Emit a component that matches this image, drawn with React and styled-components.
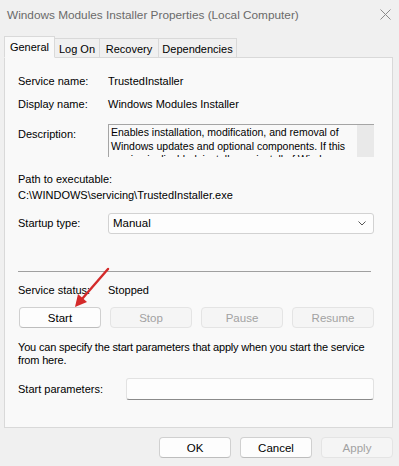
import React from 'react';
import styled, { createGlobalStyle } from 'styled-components';

const GlobalStyle = createGlobalStyle`
  body {
    margin: 0;
    background-color: #f0f0f0;
    font-family: 'Liberation Sans', Arial, sans-serif;
    font-size: 11px;
    color: #000;
  }
`;

const Window = styled.div`
  position: relative;
  width: 399px;
  height: 466px;
  background-color: #f0f0f0;
  overflow: hidden;
`;

const TitleBar = styled.div`
  display: flex;
  align-items: center;
  justify-content: space-between;
  height: 30px;
  padding: 0 8px 0 7px;
  color: #6a6a6a;
  font-size: 11.8px;
`;

const CloseIcon = styled.svg`
  width: 11px;
  height: 11px;
  margin-top: -2px;
`;

const Tabs = styled.div`
  display: flex;
  align-items: flex-end;
  height: 27px;
  margin-left: 4px;
`;

const Tab = styled.div`
  display: flex;
  align-items: center;
  justify-content: center;
  height: ${({ active }) => (active ? '22px' : '20px')};
  width: ${({ w }) => w}px;
  margin-bottom: -1px;
  background-color: ${({ active }) => (active ? '#f9f9f9' : '#f0f0f0')};
  border: 1px solid #d9d9d9;
  border-bottom: ${({ active }) => (active ? '1px solid #f9f9f9' : '1px solid #d9d9d9')};
  border-left: ${({ first }) => (first ? '1px solid #d9d9d9' : 'none')};
  box-sizing: border-box;
  position: relative;
  z-index: ${({ active }) => (active ? 2 : 1)};
  padding-top: ${({ active }) => (active ? '0' : '1px')};
`;

const Panel = styled.div`
  position: relative;
  width: 389px;
  height: 371px;
  margin-left: 4px;
  box-sizing: border-box;
  background-color: #f9f9f9;
  border: 1px solid #d9d9d9;
  padding: 16px 17px 0 13px;
`;

const Row = styled.div`
  display: flex;
  align-items: ${({ top }) => (top ? 'flex-start' : 'center')};
  margin-top: ${({ mt }) => mt || 0}px;
  line-height: 15px;
`;

const Label = styled.div`
  width: ${({ w }) => w || 90}px;
  flex-shrink: 0;
  padding-top: ${({ pt }) => pt || 0}px;
`;

const Plain = styled.div`
  line-height: ${({ lh }) => lh || 15}px;
  margin-top: ${({ mt }) => mt || 0}px;
  white-space: nowrap;
  letter-spacing: ${({ tight }) => (tight ? '-0.18px' : 'normal')};
`;

const DescBox = styled.div`
  display: flex;
  width: 266px;
  height: 33px;
  box-sizing: border-box;
  border-top: 1px solid #a5a5a5;
  border-left: 1px solid #a5a5a5;
  background-color: #f9f9f9;
  overflow: hidden;
`;

const DescText = styled.div`
  flex: 1;
  padding: 1px 0 0 2px;
  font-size: 10.5px;
  line-height: 13.5px;
  white-space: nowrap;
  overflow: hidden;
`;

const ScrollTrack = styled.div`
  width: 17px;
  background-color: #e9e9e9;
`;

const Select = styled.div`
  display: flex;
  align-items: center;
  justify-content: space-between;
  width: 266px;
  height: 21px;
  box-sizing: border-box;
  padding: 0 7px 0 4px;
  background-color: #fdfdfd;
  border: 1px solid #d2d2d2;
  border-radius: 3px;
  font-size: 11.5px;
`;

const Chevron = styled.svg`
  width: 8px;
  height: 5px;
`;

const Separator = styled.div`
  width: 353px;
  height: 1px;
  margin: 37px 0 0 0;
  background-color: #a0a0a0;
`;

const ButtonRow = styled.div`
  display: grid;
  grid-template-columns: repeat(${({ cols }) => cols}, ${({ bw }) => bw}px);
  gap: 9px;
  margin-top: ${({ mt }) => mt || 0}px;
  margin-left: ${({ ml }) => ml || 0}px;
`;

const Button = styled.div`
  display: flex;
  align-items: center;
  justify-content: center;
  height: 21px;
  box-sizing: border-box;
  border-radius: 4px;
  font-size: 11.5px;
  background-color: ${({ disabled }) => (disabled ? '#f5f5f5' : '#fdfdfd')};
  border: 1px solid ${({ disabled }) => (disabled ? '#e4e4e4' : '#d0d0d0')};
  border-bottom-color: ${({ disabled }) => (disabled ? '#e4e4e4' : '#bdbdbd')};
  color: ${({ disabled }) => (disabled ? '#a2a2a2' : '#000')};
`;

const TextInput = styled.div`
  width: 248px;
  height: 22px;
  box-sizing: border-box;
  background-color: #fdfdfd;
  border: 1px solid #e2e2e2;
  border-bottom: 1px solid #8a8a8a;
  border-radius: 3px;
`;

const Footer = styled.div`
  display: flex;
  justify-content: flex-end;
  padding: 9px 6px 0 0;
`;

const Arrow = styled.svg`
  position: absolute;
  left: 0;
  top: 0;
  pointer-events: none;
`;

const App = () => (
  <Window>
    <GlobalStyle />
    <TitleBar>
      <span>Windows Modules Installer Properties (Local Computer)</span>
      <CloseIcon viewBox="0 0 11 11">
        <path d="M0.5 0.5 L10.5 10.5 M10.5 0.5 L0.5 10.5" stroke="#8a8a8a" strokeWidth="1" />
      </CloseIcon>
    </TitleBar>
    <Tabs>
      <Tab active first w={51}>General</Tab>
      <Tab w={45}>Log On</Tab>
      <Tab w={59}>Recovery</Tab>
      <Tab w={78}>Dependencies</Tab>
    </Tabs>
    <Panel>
      <Row>
        <Label>Service name:</Label>
        <span>TrustedInstaller</span>
      </Row>
      <Row mt={8}>
        <Label>Display name:</Label>
        <span>Windows Modules Installer</span>
      </Row>
      <Row top mt={12}>
        <Label pt={3}>Description:</Label>
        <DescBox>
          <DescText>
            Enables installation, modification, and removal of<br />
            Windows updates and optional components. If this<br />
            service is disabled, install or uninstall of Windows<br />
            updates might fail for this computer.
          </DescText>
          <ScrollTrack />
        </DescBox>
      </Row>
      <Plain mt={15}>Path to executable:</Plain>
      <Plain mt={1}>C:\WINDOWS\servicing\TrustedInstaller.exe</Plain>
      <Row mt={10}>
        <Label>Startup type:</Label>
        <Select>
          <span>Manual</span>
          <Chevron viewBox="0 0 8 5">
            <path d="M0.5 0.5 L4 4 L7.5 0.5" fill="none" stroke="#555" strokeWidth="1" />
          </Chevron>
        </Select>
      </Row>
      <Separator />
      <Row mt={11}>
        <Label>Service status:</Label>
        <span>Stopped</span>
      </Row>
      <ButtonRow cols={4} bw={82} mt={9} ml={1}>
        <Button>Start</Button>
        <Button disabled>Stop</Button>
        <Button disabled>Pause</Button>
        <Button disabled>Resume</Button>
      </ButtonRow>
      <Plain tight lh={13} mt={13}>
        You can specify the start parameters that apply when you start the service<br />
        from here.
      </Plain>
      <Row mt={11}>
        <Label w={108}>Start parameters:</Label>
        <TextInput />
      </Row>
    </Panel>
    <Footer>
      <ButtonRow cols={3} bw={72}>
        <Button>OK</Button>
        <Button>Cancel</Button>
        <Button disabled>Apply</Button>
      </ButtonRow>
    </Footer>
    <Arrow width="399" height="466" viewBox="0 0 399 466">
      <line x1="108" y1="269" x2="82" y2="299" stroke="#d42a2a" strokeWidth="2.4" strokeLinecap="round" />
      <polygon points="75,307 78,294 87,302" fill="#d42a2a" />
    </Arrow>
  </Window>
);

export default App;
